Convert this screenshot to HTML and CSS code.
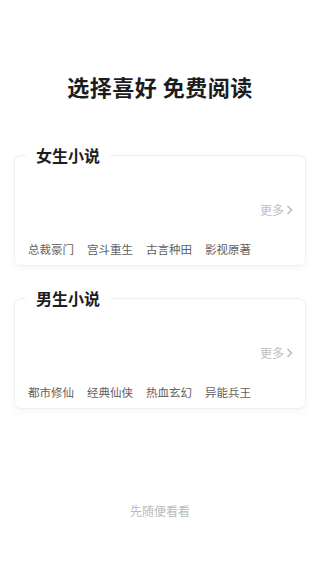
FILE: index.html
```html
<!DOCTYPE html>
<html lang="zh-CN">
<head>
    <meta charset="UTF-8">
    <meta name="viewport" content="width=device-width, initial-scale=1.0">
    <title>选择喜好</title>
    <link rel="stylesheet" href="styles.css">
</head>
<body>
    <div class="page">
        <h1 class="headline">选择喜好&nbsp;免费阅读</h1>

        <div class="card">
            <div class="card-title">女生小说</div>
            <div class="more">更多<svg class="chev" width="7" height="10" viewBox="0 0 7 10"><path d="M1.5 1 L5.5 5 L1.5 9" fill="none" stroke="#bdbdbd" stroke-width="1.6"/></svg></div>
            <div class="tags">
                <span>总裁豪门</span>
                <span>宫斗重生</span>
                <span>古言种田</span>
                <span>影视原著</span>
            </div>
        </div>

        <div class="card card-second">
            <div class="card-title">男生小说</div>
            <div class="more">更多<svg class="chev" width="7" height="10" viewBox="0 0 7 10"><path d="M1.5 1 L5.5 5 L1.5 9" fill="none" stroke="#bdbdbd" stroke-width="1.6"/></svg></div>
            <div class="tags">
                <span>都市修仙</span>
                <span>经典仙侠</span>
                <span>热血玄幻</span>
                <span>异能兵王</span>
            </div>
        </div>

        <div class="skip">先随便看看</div>
    </div>
</body>
</html>
```

FILE: styles.css
```css
body {
    margin: 0;
    background-color: #fff;
    font-family: "Noto Sans CJK SC", "Noto Sans", sans-serif;
}
.page {
    width: 320px;
    height: 570px;
    overflow: hidden;
}
.headline {
    margin: 71px 0 0;
    font-size: 22px;
    line-height: 30px;
    font-weight: 700;
    text-align: center;
    color: #1c1c1c;
    letter-spacing: 0.5px;
}
.card {
    margin: 54px 14px 0;
    border: 1px solid #efefef;
    border-radius: 7px;
    box-shadow: 0 3px 6px rgba(0, 0, 0, 0.04);
    padding: 0 12px 8px 13px;
}
.card-second {
    margin-top: 32px;
}
.card-title {
    width: fit-content;
    margin: -12px 0 0 -2px;
    padding: 0 10px;
    background-color: #fff;
    font-size: 16px;
    line-height: 22px;
    font-weight: 700;
    color: #1e1e1e;
}
.more {
    margin-top: 36px;
    display: flex;
    justify-content: flex-end;
    align-items: center;
    font-size: 12px;
    line-height: 16px;
    color: #bdbdbd;
}
.chev {
    margin-left: 2px;
}
.tags {
    margin-top: 23px;
    display: flex;
    gap: 13px;
    font-size: 11.5px;
    line-height: 16px;
    color: #606060;
}
.skip {
    margin-top: 93px;
    text-align: center;
    font-size: 12px;
    line-height: 18px;
    color: #bbb;
}
```
